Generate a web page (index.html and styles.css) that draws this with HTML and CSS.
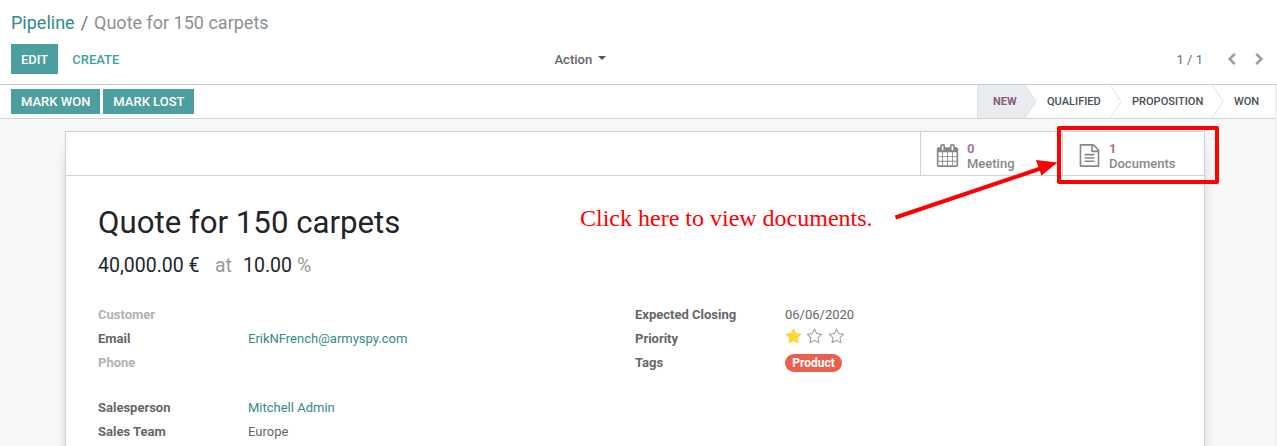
FILE: index.html
```html
<!DOCTYPE html>
<html lang="en">
<head>
<meta charset="utf-8">
<title>Quote for 150 carpets</title>
<link rel="stylesheet" href="styles.css">
</head>
<body>
<svg class="defs" aria-hidden="true">
  <symbol id="calendar" viewBox="0 0 1792 1792"><path d="M192 1664h288v-288h-288v288zm352 0h320v-288h-320v288zm-352-352h288v-320h-288v320zm352 0h320v-320h-320v320zm-352-384h288v-288h-288v288zm736 736h320v-288h-320v288zm-384-736h320v-288h-320v288zm768 736h288v-288h-288v288zm-384-352h320v-320h-320v320zm-352-864v-288q0-13-9.500-22.500t-22.500-9.500h-64q-13 0-22.500 9.500t-9.500 22.500v288q0 13 9.500 22.500t22.500 9.500h64q13 0 22.500-9.500t9.500-22.500zm736 864h288v-320h-288v320zm-384-384h320v-288h-320v288zm384 0h288v-288h-288v288zm32-480v-288q0-13-9.500-22.500t-22.500-9.500h-64q-13 0-22.500 9.500t-9.500 22.500v288q0 13 9.500 22.500t22.500 9.500h64q13 0 22.500-9.500t9.500-22.500zm384-64v1280q0 52-38 90t-90 38h-1408q-52 0-90-38t-38-90v-1280q0-52 38-90t90-38h128v-96q0-66 47-113t113-47h64q66 0 113 47t47 113v96h384v-96q0-66 47-113t113-47h64q66 0 113 47t47 113v96h128q52 0 90 38t38 90z"/></symbol>
  <symbol id="file" viewBox="0 0 1792 1792"><path d="M1596 380q28 28 48 76t20 88v1152q0 40-28 68t-68 28h-1344q-40 0-68-28t-28-68v-1600q0-40 28-68t68-28h896q40 0 88 20t76 48zm-444-244v376h376q-10-29-22-41l-313-313q-12-12-41-22zm384 1528v-1024h-416q-40 0-68-28t-28-68v-416h-768v1536h1280zm-1024-864q0-14 9-23t23-9h704q14 0 23 9t9 23v64q0 14-9 23t-23 9h-704q-14 0-23-9t-9-23v-64zm736 224q14 0 23 9t9 23v64q0 14-9 23t-23 9h-704q-14 0-23-9t-9-23v-64q0-14 9-23t23-9h704zm0 256q14 0 23 9t9 23v64q0 14-9 23t-23 9h-704q-14 0-23-9t-9-23v-64q0-14 9-23t23-9h704z"/></symbol>
  <symbol id="star" viewBox="0 0 1792 1792"><path d="M1728 647q0 22-26 48l-363 354 86 500q1 7 1 20 0 21-10.500 35.500t-30.500 14.500q-19 0-40-12l-449-236-449 236q-22 12-40 12-21 0-31.500-14.500t-10.500-35.500q0-6 2-20l86-500-364-354q-25-27-25-48 0-37 56-46l502-73 225-455q19-41 49-41t49 41l225 455 502 73q56 9 56 46z"/></symbol>
  <symbol id="star-o" viewBox="0 0 1792 1792"><path d="M1201 1004l306-297-422-62-189-382-189 382-422 62 306 297-73 421 378-199 377 199zm527-357q0 22-26 48l-363 354 86 500q1 7 1 20 0 50-41 50-19 0-40-12l-449-236-449 236q-22 12-40 12-21 0-31.500-14.500t-10.500-35.500q0-6 2-20l86-500-364-354q-25-27-25-48 0-37 56-46l502-73 225-455q19-41 49-41t49 41l225 455 502 73q56 9 56 46z"/></symbol>
  <symbol id="left" viewBox="0 0 1792 1792"><path d="M1427 301l-531 531 531 531q19 19 19 45t-19 45l-166 166q-19 19-45 19t-45-19l-742-742q-19-19-19-45t19-45l742-742q19-19 45-19t45 19l166 166q19 19 19 45t-19 45z"/></symbol>
  <symbol id="right" viewBox="0 0 1792 1792"><path d="M1363 877l-742 742q-19 19-45 19t-45-19l-166-166q-19-19-19-45t19-45l531-531-531-531q-19-19-19-45t19-45l166-166q19-19 45-19t45 19l742 742q19 19 19 45t-19 45z"/></symbol>
  <symbol id="sep" viewBox="0 0 12 33"><path d="M.5 0 11 16.500.5 33" fill="none" stroke="#dee2e6"/></symbol>
</svg>

<header class="control-panel">
  <div class="breadcrumb"><a>Pipeline</a><span class="slash">/</span><span class="current">Quote for 150 carpets</span></div>
  <div class="toolbar">
    <div class="buttons"><button class="btn primary">EDIT</button><button class="btn link">CREATE</button></div>
    <div class="action">Action<i class="caret"></i></div>
    <div class="pager"><span>1 / 1</span><svg><use href="#left"/></svg><svg><use href="#right"/></svg></div>
  </div>
</header>

<main class="content">
  <div class="statusbar">
    <div class="marks"><button class="btn primary">MARK WON</button><button class="btn primary">MARK LOST</button></div>
    <div class="stages">
      <span class="stage active">NEW</span>
      <svg class="tip" viewBox="0 0 12 33"><path d="M0 0 11 16.500 0 33z" fill="#e9ecef"/><path d="M.5 0 11 16.500.5 33" fill="none" stroke="#dee2e6"/></svg>
      <span class="stage qualified">QUALIFIED</span>
      <svg class="tip"><use href="#sep"/></svg>
      <span class="stage proposition">PROPOSITION</span>
      <svg class="tip"><use href="#sep"/></svg>
      <span class="stage won">WON</span>
    </div>
  </div>

  <section class="sheet">
    <div class="button-box">
      <div class="stat"><svg><use href="#calendar"/></svg><div><b>0</b><span>Meeting</span></div></div>
      <div class="stat"><svg><use href="#file"/></svg><div><b>1</b><span>Documents</span></div></div>
    </div>
    <div class="body">
      <h1>Quote for 150 carpets</h1>
      <h2><span>40,000.00 €</span><span class="muted at">at</span><span>10.00</span><span class="muted pct">%</span></h2>
      <div class="groups">
        <dl>
          <dt class="empty">Customer</dt><dd></dd>
          <dt>Email</dt><dd><a>ErikNFrench@armyspy.com</a></dd>
          <dt class="empty">Phone</dt><dd></dd>
        </dl>
        <dl>
          <dt>Expected Closing</dt><dd>06/06/2020</dd>
          <dt>Priority</dt><dd class="stars"><svg class="on"><use href="#star"/></svg><svg><use href="#star-o"/></svg><svg><use href="#star-o"/></svg></dd>
          <dt>Tags</dt><dd><span class="tag">Product</span></dd>
        </dl>
        <dl>
          <dt>Salesperson</dt><dd><a>Mitchell Admin</a></dd>
          <dt>Sales Team</dt><dd>Europe</dd>
        </dl>
      </div>
    </div>
  </section>
</main>

<div class="callout-text">Click here to view documents.</div>
<svg class="callout" viewBox="0 0 1277 446">
  <rect x="1059" y="128" width="158" height="54" fill="none" stroke="#f00" stroke-width="4" stroke-linejoin="round"/>
  <path d="M895.500 217.500 1042 168" stroke="#f00" stroke-width="4"/>
  <path d="M1036 160 1057.500 162.500 1041.500 175.500z" fill="#f00"/>
</svg>
</body>
</html>
```

FILE: styles.css
```css
* { box-sizing: border-box; }
body {
  margin: 0;
  width: 1277px;
  height: 446px;
  overflow: hidden;
  position: relative;
  display: flex;
  flex-direction: column;
  background: #fff;
  color: #666;
  font: 13px/20px Roboto, sans-serif;
}
svg { fill: currentColor; flex: none; }
.defs { position: absolute; width: 0; height: 0; }
a { color: #338a8a; }

.control-panel { flex: none; height: 85px; border-bottom: 1px solid #c9ccd2; padding: 9px 11px 0; }
.breadcrumb { display: flex; font-size: 18px; line-height: 27px; }
.slash { padding: 0 6px; color: #6c757d; }
.current { color: #8f8f8f; }
.toolbar { display: grid; grid-template-columns: 543.500px 1fr auto; align-items: center; margin-top: 8px; height: 30px; }
.buttons { display: flex; gap: 4px; }
.btn { border: 0; margin: 0; padding: 2px 10px 0; font: 500 13px/28px Roboto, sans-serif; height: 30px; white-space: nowrap; }
.primary { background: #4c9f9e; color: #fff; }
.link { background: none; color: #3f9f9d; }
.action { display: flex; align-items: center; padding-top: 2px; font-weight: 500; }
.caret { margin: -4px 0 0 6px; border: 4px solid transparent; border-top-color: #555; border-bottom: 0; }
.pager { display: flex; align-items: center; color: #6b7177; }
.pager svg { width: 13px; height: 13px; color: #9a9fa4; }
.pager span { padding-top: 2px; margin-right: 22px; }
.pager svg + svg { margin: 0 0 0 15px; }

.content { flex: 1; min-height: 0; overflow: hidden; display: flex; flex-direction: column; background: #f8f8f8; border-right: 2px solid #f1f1f1; }
.statusbar { flex: none; display: flex; justify-content: space-between; height: 34px; background: #fff; border-bottom: 1px solid #ced4da; padding-left: 11px; }
.marks { display: flex; gap: 3px; padding-top: 4px; }
.marks .btn { height: 25px; padding-top: 1px; line-height: 24px; }
.stages { display: flex; height: 33px; font-size: 11.050px; font-weight: 500; line-height: 33px; color: #495057; }
.stage { white-space: nowrap; }
.active { width: 48px; padding-left: 15px; background: #e9ecef; border-left: 1px solid #dee2e6; color: #875a7b; font-weight: 700; }
.tip { width: 12px; height: 33px; }
.qualified { width: 73px; padding-left: 10px; }
.proposition { width: 90px; padding-left: 10px; }
.won { width: 51px; padding-left: 10px; }

.sheet { flex: 1; min-height: 0; width: 1140px; margin: 12px 0 -60px 65px; background: #fff; border: 1px solid #ced2d9; box-shadow: 0 5px 20px -15px #000; }
.button-box { display: flex; justify-content: flex-end; height: 44px; border-bottom: 1px solid #ced2d9; }
.stat { display: flex; width: 142px; border-left: 1px solid #ced4da; padding: 9px 0 0 14px; font-weight: 500; line-height: 15px; color: #888; }
.stat svg { width: 23px; height: 23px; margin: 2.500px 8.500px 0 .5px; }
.stat b, .stat span { display: block; }
.stat b { font-weight: 700; color: #a0789a; }
.body { padding: 0 32px; }
h1 { margin: 28px 0 0; font-size: 31.200px; font-weight: 400; line-height: 38px; color: #212529; }
h2 { display: flex; margin: 12px 0 0; font-size: 19.500px; font-weight: 400; line-height: 24px; color: #212529; }
.muted { color: #999; }
.at { margin: 0 11px 0 15.500px; }
.pct { margin-left: 5px; }
.groups { display: grid; grid-template-columns: 537px 537px; row-gap: 21px; margin-top: 25px; }
dl { display: grid; grid-template-columns: 150px 1fr; grid-auto-rows: 24px; align-content: start; margin: 0; line-height: 24px; }
dt { font-weight: 700; }
dd { margin: 0; }
.empty { color: #b2b2b2; }
.stars { display: flex; gap: 4.500px; padding-top: 1.400px; margin-left: -.5px; color: #a8a8a8; }
.stars svg { width: 17px; height: 17px; }
.stars .on { color: #fdd835; }
.tag { display: block; width: 57px; height: 18px; margin-top: 3px; border-radius: 9px; background: #eb5f4e; color: #fff; font-size: 12px; font-weight: 700; line-height: 18px; text-align: center; }

/* Annotation drawn over the form */
.callout-text { position: absolute; left: 580px; top: 204px; font: 24px/28px "Liberation Serif", serif; color: #f00; white-space: nowrap; }
.callout { position: absolute; inset: 0; width: 1277px; height: 446px; }
```
